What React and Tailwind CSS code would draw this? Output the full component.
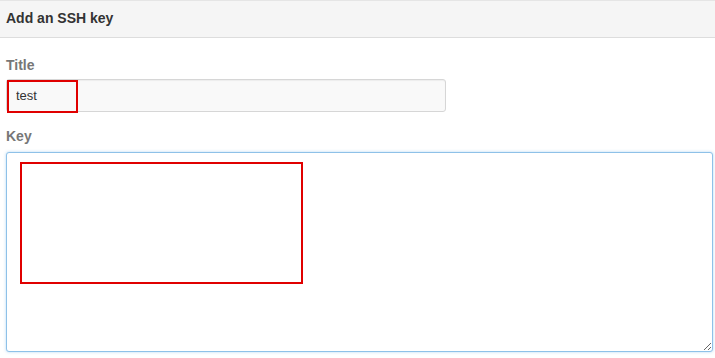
import React from 'react';

export default function App() {
  return (
    <div className="w-[715px] h-[358px] bg-white overflow-hidden font-['Liberation_Sans',Arial,sans-serif] text-[13px] text-[#333]">
      {/* panel heading */}
      <div className="h-[38px] bg-[#f5f5f5] border-t border-b border-[#e5e5e5] border-b-[#dddddd] flex items-center px-[6px]">
        <h3 className="font-bold text-[14px] text-[#333] -mt-[1px]">Add an SSH key</h3>
      </div>

      <div className="pl-[6px] pr-[2px] pt-[19px]">
        <label className="block font-bold text-[14px] text-[#777] leading-[16px]">Title</label>
        <div className="relative mt-[6px] w-[440px]">
          <input
            readOnly
            value="test"
            className="block w-full h-[33px] rounded-[3px] border border-[#d6d6d6] bg-[#f9f9f9] pl-[9px] text-[13px] text-[#333] shadow-[inset_0_1px_1px_rgba(0,0,0,0.05)] outline-none"
          />
          <div className="absolute left-[1px] top-[1px] w-[71px] h-[33px] border-2 border-[#e00000]" />
        </div>

        <label className="block font-bold text-[14px] text-[#777] leading-[16px] mt-[16px]">Key</label>
        <div className="relative mt-[8px]">
          <textarea
            readOnly
            className="block w-full h-[200px] rounded-[3px] border border-[#8ec1e8] bg-white shadow-[0_0_3px_rgba(102,175,233,0.5)] outline-none resize-y"
          />
          <div className="absolute left-[14px] top-[10px] w-[283px] h-[122px] border-2 border-[#e00000]" />
        </div>
      </div>
    </div>
  );
}
